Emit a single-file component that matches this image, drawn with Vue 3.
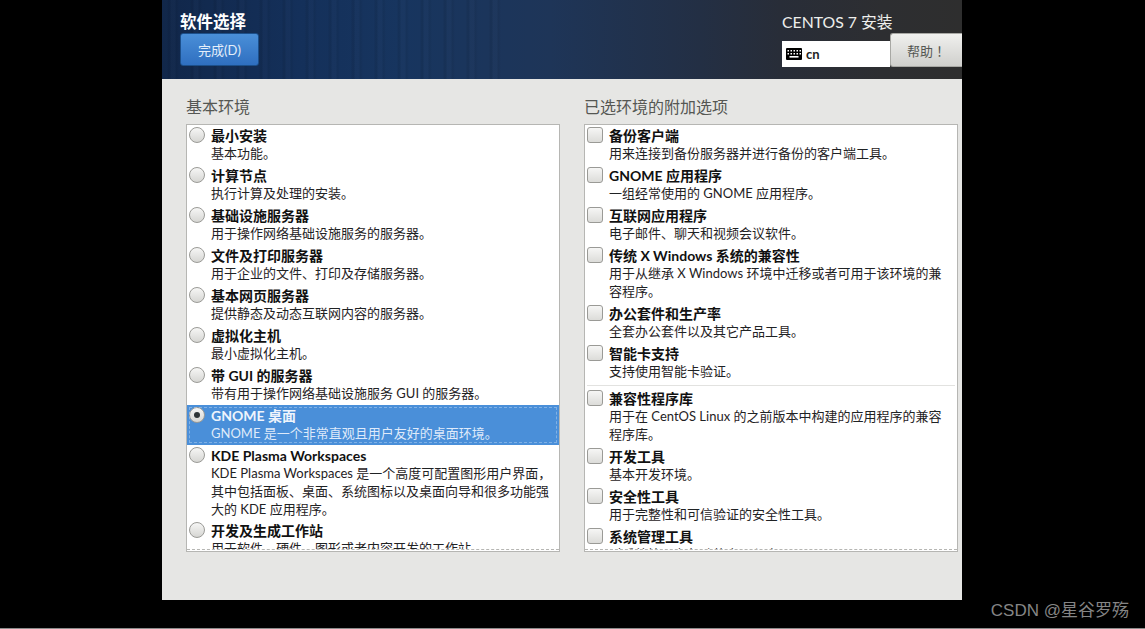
<script setup>
const envs = [
  { t: '最小安装', d: ['基本功能。'] },
  { t: '计算节点', d: ['执行计算及处理的安装。'] },
  { t: '基础设施服务器', d: ['用于操作网络基础设施服务的服务器。'] },
  { t: '文件及打印服务器', d: ['用于企业的文件、打印及存储服务器。'] },
  { t: '基本网页服务器', d: ['提供静态及动态互联网内容的服务器。'] },
  { t: '虚拟化主机', d: ['最小虚拟化主机。'] },
  { t: '带 GUI 的服务器', d: ['带有用于操作网络基础设施服务 GUI 的服务器。'] },
  { t: 'GNOME 桌面', d: ['GNOME 是一个非常直观且用户友好的桌面环境。'], sel: true },
  { t: 'KDE Plasma Workspaces', d: ['KDE Plasma Workspaces 是一个高度可配置图形用户界面，', '其中包括面板、桌面、系统图标以及桌面向导和很多功能强', '大的 KDE 应用程序。'], tight: true },
  { t: '开发及生成工作站', d: ['用于软件、硬件、图形或者内容开发的工作站。'] },
]
const addons1 = [
  { t: '备份客户端', d: ['用来连接到备份服务器并进行备份的客户端工具。'] },
  { t: 'GNOME 应用程序', d: ['一组经常使用的 GNOME 应用程序。'] },
  { t: '互联网应用程序', d: ['电子邮件、聊天和视频会议软件。'] },
  { t: '传统 X Windows 系统的兼容性', d: ['用于从继承 X Windows 环境中迁移或者可用于该环境的兼', '容程序。'] },
  { t: '办公套件和生产率', d: ['全套办公套件以及其它产品工具。'] },
  { t: '智能卡支持', d: ['支持使用智能卡验证。'] },
]
const addons2 = [
  { t: '兼容性程序库', d: ['用于在 CentOS Linux 的之前版本中构建的应用程序的兼容', '程序库。'] },
  { t: '开发工具', d: ['基本开发环境。'] },
  { t: '安全性工具', d: ['用于完整性和可信验证的安全性工具。'] },
  { t: '系统管理工具', d: ['对系统管理有帮助的实用程序。'] },
]
const keys = [3, 6, 9, 12, 15]
</script>

<template>
  <div class="page">
    <div class="screen">
      <header class="head">
        <div class="head-left">
          <div class="spoke-title">软件选择</div>
          <button class="done">完成(D)</button>
        </div>
        <div class="head-right">
          <div class="product">CENTOS 7 安装</div>
          <div class="tools">
            <div class="layout">
              <svg class="kbd" width="16" height="12" viewBox="0 0 16 12">
                <rect width="16" height="12" rx="1" fill="#000" />
                <rect v-for="x in keys" :key="'a' + x" :x="x - 1.5" y="2" width="1.5" height="1.5" fill="#fff" />
                <rect v-for="x in keys" :key="'b' + x" :x="x - 1.5" y="5" width="1.5" height="1.5" fill="#fff" />
                <rect x="3.5" y="8" width="9" height="1.6" fill="#fff" />
              </svg>
              <span>cn</span>
            </div>
            <button class="help">帮助！</button>
          </div>
        </div>
      </header>
      <main class="body">
        <section class="col">
          <h2 class="col-title">基本环境</h2>
          <div class="list">
            <div v-for="e in envs" :key="e.t" class="row" :class="{ selected: e.sel, tight: e.tight }">
              <span class="radio" :class="{ on: e.sel }"></span>
              <div class="txt">
                <div class="name">{{ e.t }}</div>
                <div v-for="l in e.d" :key="l" class="desc">{{ l }}</div>
              </div>
            </div>
            <div class="clip"></div>
          </div>
        </section>
        <section class="col">
          <h2 class="col-title">已选环境的附加选项</h2>
          <div class="list">
            <div v-for="e in addons1" :key="e.t" class="row check-row">
              <span class="check"></span>
              <div class="txt">
                <div class="name">{{ e.t }}</div>
                <div v-for="l in e.d" :key="l" class="desc">{{ l }}</div>
              </div>
            </div>
            <div class="sep"></div>
            <div v-for="e in addons2" :key="e.t" class="row check-row">
              <span class="check"></span>
              <div class="txt">
                <div class="name">{{ e.t }}</div>
                <div v-for="l in e.d" :key="l" class="desc">{{ l }}</div>
              </div>
            </div>
            <div class="clip"></div>
          </div>
        </section>
      </main>
    </div>
    <div class="foot">CSDN @星谷罗殇</div>
  </div>
</template>

<style>
html, body { margin: 0; background: #000; overflow: hidden; }
</style>

<style scoped>
.page {
  width: 1145px;
  height: 629px;
  box-sizing: border-box;
  background: #000;
  border-bottom: 1px solid #8c8c8c;
  font-family: Lato, "Noto Sans CJK SC", sans-serif;
  font-size: 13px;
  color: #2e3436;
  overflow: hidden;
}
.screen {
  width: 800px;
  height: 600px;
  margin-left: 162px;
  background: #e6e6e4;
}
.head {
  height: 79px;
  box-sizing: border-box;
  display: flex;
  justify-content: space-between;
  padding-left: 18px;
  background:
    repeating-linear-gradient(90deg, rgba(0,0,0,0) 0 5px, rgba(0,0,0,.07) 6px 8px, rgba(255,255,255,.012) 9px 13px, rgba(0,0,0,.05) 14px 15px, rgba(0,0,0,0) 17px 23px) 0 0 / 340px 100% no-repeat,
    linear-gradient(90deg, #11274a 0, #14305a 138px, #17355f 238px, #1e3558 388px, #232f44 538px, #282d38 618px, #2d2e31 720px, #2e2e2e 800px);
}
.spoke-title {
  margin-top: 12px;
  height: 21px;
  line-height: 21px;
  font-size: 16.5px;
  font-weight: 700;
  color: #fff;
}
.done {
  display: block;
  width: 79px;
  height: 33px;
  padding: 0;
  border: 1px solid #1c4f8a;
  border-radius: 3px;
  background: linear-gradient(#4a8fd8, #2f6fc0);
  color: #e4eefa;
  font: inherit;
  font-size: 13px;
}
.head-right { width: 180px; }
.product {
  margin-top: 11px;
  height: 22px;
  line-height: 22px;
  font-size: 15.8px;
  color: #eeeeec;
}
.tools { display: flex; align-items: flex-end; height: 34px; }
.layout {
  width: 108px;
  height: 26px;
  box-sizing: border-box;
  background: #fff;
  display: flex;
  align-items: center;
  gap: 4px;
  padding-left: 4px;
  font-weight: 700;
  font-size: 13px;
  color: #222;
}
.help {
  width: 72px;
  height: 34px;
  padding: 0;
  border: 1px solid #a8a8a4;
  border-right: 0;
  border-radius: 3px 0 0 3px;
  background: linear-gradient(#f0f0ee, #cfcfcc);
  color: #555753;
  font-family: "Noto Sans CJK TC", sans-serif;
  font-size: 13px;
}
.body {
  display: flex;
  gap: 24px;
  padding: 0 4px 0 24px;
}
.col { width: 374px; }
.col-title {
  margin: 0;
  height: 45px;
  box-sizing: border-box;
  padding-top: 18px;
  line-height: 20px;
  font-size: 16px;
  font-weight: 400;
  color: #555753;
}
.list {
  position: relative;
  height: 428px;
  box-sizing: border-box;
  background: #fff;
  border: 1px solid #b6b6b3;
  overflow: hidden;
}
.row {
  display: flex;
  padding: 2px 0;
  color: #1f2224;
}
.row.tight { padding-bottom: 1px; }
.name, .desc { height: 18px; line-height: 18px; white-space: nowrap; }
.name { font-size: 14px; font-weight: 700; color: #111; }
.desc { position: relative; top: -1px; }
.radio {
  flex: none;
  width: 14px;
  height: 14px;
  margin: 0 6px 0 2px;
  border: 1px solid #9a9a96;
  border-radius: 50%;
  background: linear-gradient(#f6f6f5, #d6d6d3);
  position: relative;
}
.radio.on::after {
  content: "";
  position: absolute;
  left: 4px;
  top: 4px;
  width: 6px;
  height: 6px;
  border-radius: 50%;
  background: #2e3436;
}
.selected { background: #4a8fd9; color: #dfeafa; position: relative; }
.selected .name { color: #eef4fc; }
.selected::after {
  content: "";
  position: absolute;
  inset: 2px;
  border: 1px dashed rgba(255,255,255,.3);
  pointer-events: none;
}
.check-row .txt { margin-left: 6px; }
.check {
  flex: none;
  width: 14px;
  height: 14px;
  margin-left: 2px;
  border: 1px solid #9a9a96;
  border-radius: 3px;
  background: linear-gradient(#f6f6f5, #dcdcd9);
}
.sep { height: 1px; margin: 2px; background: #e2e2e0; }
.clip {
  position: absolute;
  left: 0;
  right: 0;
  bottom: 0;
  height: 1px;
  background: #fff;
  border-top: 1px dashed #b6b6b3;
}
.foot {
  height: 28px;
  line-height: 21px;
  padding-right: 16px;
  text-align: right;
  font-family: "Liberation Sans", "Noto Sans CJK SC", sans-serif;
  font-size: 17px;
  color: #858585;
}
</style>
